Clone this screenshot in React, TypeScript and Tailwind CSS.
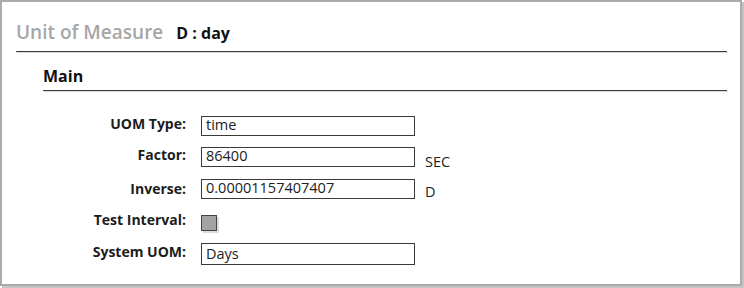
import React from "react";

const font = { fontFamily: '"Open Sans", "Noto Sans", sans-serif' };

function Label({ children, cls = "" }: { children: React.ReactNode; cls?: string }) {
  return (
    <div className={`w-[143px] shrink-0 text-right text-[14px] leading-[16px] font-bold text-[#1c1c1c] ${cls}`}>
      {children}
    </div>
  );
}

function Input({ value, h = "h-[20px]", tcls = "leading-[16px]" }: { value: string; h?: string; tcls?: string }) {
  return (
    <div className={`ml-[15px] w-[214px] ${h} border border-[#3a3a3a] bg-white pl-[4px] text-[14.5px] text-[#222] ${tcls}`}>
      {value}
    </div>
  );
}

function Unit({ children, cls }: { children: React.ReactNode; cls: string }) {
  return (
    <div className={`ml-[10px] h-[20px] text-[14.5px] leading-[16px] text-[#222] ${cls}`}>{children}</div>
  );
}

export default function App() {
  return (
    <div className="w-[744px] h-[288px] bg-white" style={font}>
      <div className="w-[742px] h-[286px] border-2 border-[#ababab] shadow-[2px_2px_0_#c4c4c4] bg-white">
        <div className="ml-[14px] mr-[13px] pt-[18px]">
          <div className="flex items-baseline h-[24px] leading-[24px]">
            <span className="text-[19px] font-semibold text-[#a6a6a6]">Unit of Measure</span>
            <span className="ml-[13px] text-[16px] font-bold text-[#111]">D : day</span>
          </div>
          <div className="mt-[7px] h-px bg-[#3c3c3c] shadow-[1px_1px_0_#dadada]" />
        </div>
        <div className="ml-[41px] mr-[13px]">
          <div className="mt-[14px] h-[20px] leading-[20px] text-[16px] font-bold text-[#111]">Main</div>
          <div className="mt-[4px] h-px bg-[#3c3c3c] shadow-[1px_1px_0_#dadada]" />
          <div className="flex flex-col">
            <div className="mt-[25px] flex items-start h-[20px]">
              <Label>UOM Type:</Label>
              <Input value="time" />
            </div>
            <div className="mt-[11px] flex items-start h-[20px]">
              <Label>Factor:</Label>
              <Input value="86400" />
              <Unit cls="pt-[7px]">SEC</Unit>
            </div>
            <div className="mt-[12px] flex items-start h-[20px]">
              <Label cls="pt-[2px]">Inverse:</Label>
              <Input value="0.00001157407407" />
              <Unit cls="pt-[5px]">D</Unit>
            </div>
            <div className="mt-[16px] flex items-start h-[16px]">
              <Label cls="-mt-[3px]">Test Interval:</Label>
              <div className="ml-[15px] w-[16px] h-[16px] border border-[#444] bg-[#a3a3a3] shadow-[2px_2px_0_#dcdcdc]" />
            </div>
            <div className="mt-[12px] flex items-start h-[22px]">
              <Label cls="pt-[1px]">System UOM:</Label>
              <Input value="Days" h="h-[22px]" tcls="leading-[18px] pt-[1px]" />
            </div>
          </div>
        </div>
      </div>
    </div>
  );
}
